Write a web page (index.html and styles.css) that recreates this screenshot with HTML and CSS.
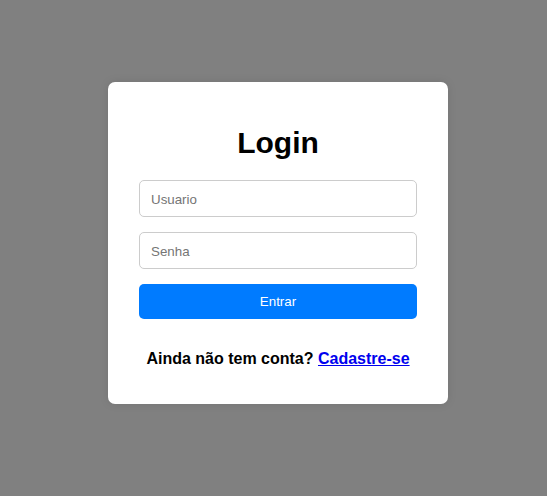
FILE: index.html
```html
<!DOCTYPE html>
<html lang="pt">
<head>
<meta charset="utf-8">
<title>Login</title>
<link rel="stylesheet" href="styles.css">
</head>
<body>
<main class="page">
  <div class="card">
    <h2 class="title">Login</h2>
    <form class="form">
      <input class="field" type="text" placeholder="Usuario">
      <input class="field" type="password" placeholder="Senha">
      <button class="btn" type="button">Entrar</button>
    </form>
    <p class="signup">Ainda não tem conta? <a href="#" class="link">Cadastre-se</a></p>
  </div>
</main>
</body>
</html>
```
FILE: styles.css
```css
* { box-sizing: border-box; }
html, body { margin: 0; padding: 0; }
body {
  background: #808080;
  font-family: "Liberation Sans", Arial, sans-serif;
  width: 547px;
  height: 496px;
  overflow: hidden;
}
.page {
  display: flex;
  align-items: flex-start;
  padding: 82px 0 0 108px;
}
.card {
  width: 340px;
  height: 322px;
  background: #fff;
  border-radius: 7px;
  box-shadow: 0 0 10px rgba(0,0,0,0.1);
  padding: 42px 31px 0;
  display: flex;
  flex-direction: column;
}
.title {
  margin: 0;
  font-size: 30px;
  line-height: 37px;
  font-weight: bold;
  text-align: center;
  color: #000;
}
.form {
  margin-top: 19px;
  display: flex;
  flex-direction: column;
  gap: 15px;
}
.field {
  height: 37px;
  width: 100%;
  border: 1px solid #ccc;
  border-radius: 5px;
  padding: 1px 11px 0;
  font-family: "Liberation Sans", Arial, sans-serif;
  font-size: 13.333px;
  color: #333;
  outline: none;
}
.field::placeholder { color: #757575; }
.btn {
  height: 35px;
  width: 100%;
  border: none;
  border-radius: 5px;
  background: #007bff;
  color: #fff;
  font-family: "Liberation Sans", Arial, sans-serif;
  font-size: 13.333px;
}
.signup {
  margin: 30px 0 0;
  text-align: center;
  font-size: 16px;
  line-height: 19px;
  font-weight: bold;
  color: #000;
}
.link { color: #0000ee; text-decoration: underline; }
```
